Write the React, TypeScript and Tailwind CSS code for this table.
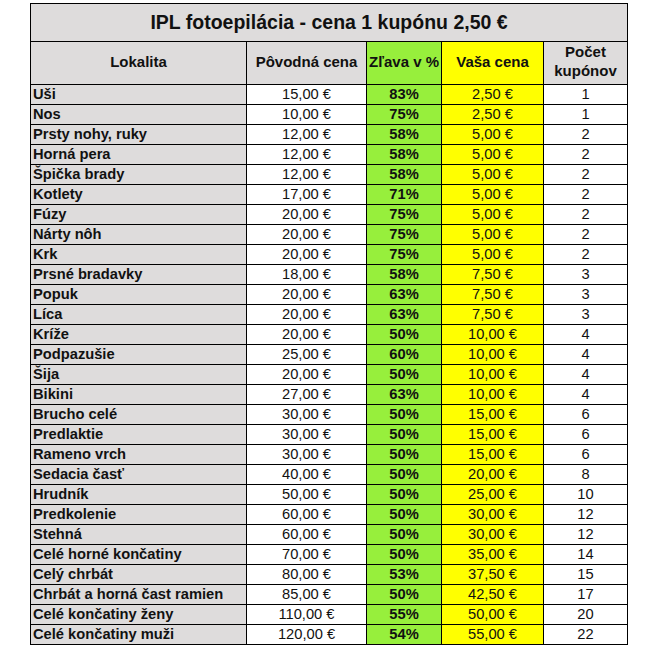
import React from "react";

type Row = [string, string, string, string, string];

const rows: Row[] = [
  ["Uši", "15,00 €", "83%", "2,50 €", "1"],
  ["Nos", "10,00 €", "75%", "2,50 €", "1"],
  ["Prsty nohy, ruky", "12,00 €", "58%", "5,00 €", "2"],
  ["Horná pera", "12,00 €", "58%", "5,00 €", "2"],
  ["Špička brady", "12,00 €", "58%", "5,00 €", "2"],
  ["Kotlety", "17,00 €", "71%", "5,00 €", "2"],
  ["Fúzy", "20,00 €", "75%", "5,00 €", "2"],
  ["Nárty nôh", "20,00 €", "75%", "5,00 €", "2"],
  ["Krk", "20,00 €", "75%", "5,00 €", "2"],
  ["Prsné bradavky", "18,00 €", "58%", "7,50 €", "3"],
  ["Popuk", "20,00 €", "63%", "7,50 €", "3"],
  ["Líca", "20,00 €", "63%", "7,50 €", "3"],
  ["Kríže", "20,00 €", "50%", "10,00 €", "4"],
  ["Podpazušie", "25,00 €", "60%", "10,00 €", "4"],
  ["Šija", "20,00 €", "50%", "10,00 €", "4"],
  ["Bikini", "27,00 €", "63%", "10,00 €", "4"],
  ["Brucho celé", "30,00 €", "50%", "15,00 €", "6"],
  ["Predlaktie", "30,00 €", "50%", "15,00 €", "6"],
  ["Rameno vrch", "30,00 €", "50%", "15,00 €", "6"],
  ["Sedacia časť", "40,00 €", "50%", "20,00 €", "8"],
  ["Hrudník", "50,00 €", "50%", "25,00 €", "10"],
  ["Predkolenie", "60,00 €", "50%", "30,00 €", "12"],
  ["Stehná", "60,00 €", "50%", "30,00 €", "12"],
  ["Celé horné končatiny", "70,00 €", "50%", "35,00 €", "14"],
  ["Celý chrbát", "80,00 €", "53%", "37,50 €", "15"],
  ["Chrbát a horná čast ramien", "85,00 €", "50%", "42,50 €", "17"],
  ["Celé končatiny ženy", "110,00 €", "55%", "50,00 €", "20"],
  ["Celé končatiny muži", "120,00 €", "54%", "55,00 €", "22"],
];

export default function App() {
  return (
    <div className="min-h-[660px] bg-white pl-[30px] pt-[3px] text-[#111] font-['Liberation_Sans',Arial,sans-serif]">
      <table className="border-collapse table-fixed w-[597px]">
        <colgroup>
          <col className="w-[216px]" />
          <col className="w-[120px]" />
          <col className="w-[75px]" />
          <col className="w-[102px]" />
          <col className="w-[84px]" />
        </colgroup>
        <thead>
          <tr>
            <th
              colSpan={5}
              className="h-[38px] border border-black bg-[#dedcdc] text-[19.5px] font-bold text-center align-middle"
            >
              IPL fotoepilácia - cena 1 kupónu 2,50 €
            </th>
          </tr>
          <tr className="text-[15px] font-bold leading-[19px]">
            <th className="h-[42px] border border-black bg-[#dedcdc] text-center pb-[3px]">Lokalita</th>
            <th className="border border-black bg-[#dedcdc] text-center pb-[3px]">Pôvodná cena</th>
            <th className="border border-black bg-[#97ef3c] text-center whitespace-nowrap pb-[3px]">Zľava v %</th>
            <th className="border border-black bg-[#ffff00] text-center pb-[3px]">Vaša cena</th>
            <th className="border border-black bg-[#dedcdc] text-center pb-[4px]">
              Počet
              <br />
              kupónov
            </th>
          </tr>
        </thead>
        <tbody className="text-[14.7px] leading-[17px]">
          {rows.map((r) => (
            <tr key={r[0]}>
              <td className="h-[20px] border border-black bg-[#dedcdc] pl-[2px] pb-[1px] font-bold whitespace-nowrap">{r[0]}</td>
              <td className="border border-black bg-white text-center pb-[1px]">{r[1]}</td>
              <td className="border border-black bg-[#97ef3c] text-center font-bold pb-[1px]">{r[2]}</td>
              <td className="border border-black bg-[#ffff00] text-center pb-[1px]">{r[3]}</td>
              <td className="border border-black bg-white text-center pb-[1px]">{r[4]}</td>
            </tr>
          ))}
        </tbody>
      </table>
    </div>
  );
}
